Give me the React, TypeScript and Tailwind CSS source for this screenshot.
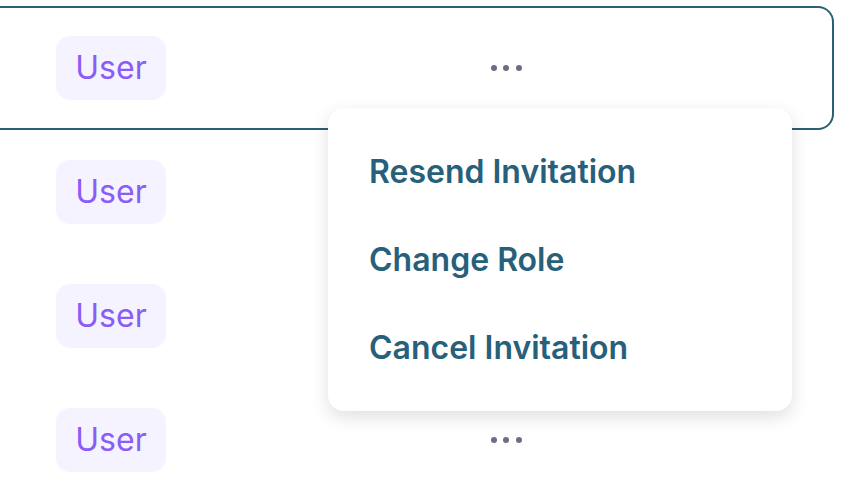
import React from "react";

function Dots() {
  return (
    <div className="flex items-center justify-center gap-[6.5px]">
      <span className="block h-[6px] w-[6px] rounded-full bg-[#6b6d86]" />
      <span className="block h-[6px] w-[6px] rounded-full bg-[#6b6d86]" />
      <span className="block h-[6px] w-[6px] rounded-full bg-[#6b6d86]" />
    </div>
  );
}

function Row({ selected, showDots }: { selected?: boolean; showDots?: boolean }) {
  return (
    <div
      className={
        "grid h-[124px] w-[834px] grid-cols-[432px_148px] items-center " +
        (selected ? "rounded-r-[16px] border-y-2 border-r-2 border-[#2b6073]" : "")
      }
    >
      <div className="pl-[56px]">
        <span className="flex h-[64px] w-[110px] items-center justify-center rounded-[14px] bg-[#f5f3ff] text-[32px] text-[#8b5cf6]">
          User
        </span>
      </div>
      <div>{showDots && <Dots />}</div>
    </div>
  );
}

export default function App() {
  return (
    <div
      className="relative h-[486px] w-[852px] overflow-hidden bg-white pt-[6px]"
      style={{ fontFamily: "Inter, 'Noto Sans', sans-serif" }}
    >
      <Row selected showDots />
      <Row />
      <Row />
      <Row showDots />
      <div className="absolute left-[328px] top-[108px] flex h-[303px] w-[464px] flex-col rounded-[16px] bg-white pl-[41px] pt-[20px] shadow-[0_6px_18px_rgba(0,0,0,0.13)]">
        <div className="flex h-[88px] items-center text-[32px] font-semibold text-[#27607a]">Resend Invitation</div>
        <div className="flex h-[88px] items-center text-[32px] font-semibold text-[#27607a]">Change Role</div>
        <div className="flex h-[88px] items-center text-[32px] font-semibold text-[#27607a]">Cancel Invitation</div>
      </div>
    </div>
  );
}
